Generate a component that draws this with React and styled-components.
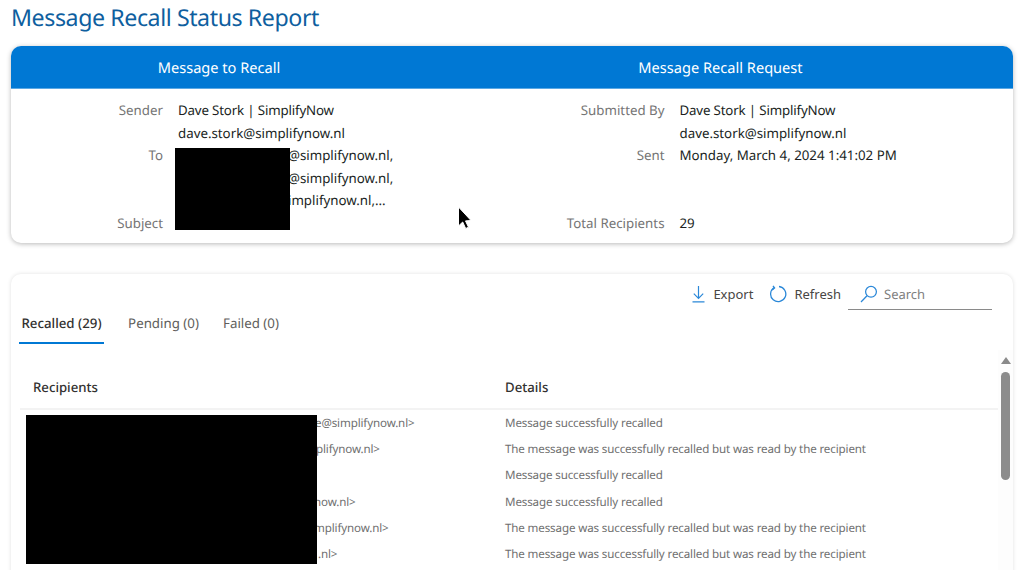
import React from "react";
import styled, { createGlobalStyle } from "styled-components";

const Global = createGlobalStyle`
  html, body { margin: 0; height: 100%; background: #fff; overflow: hidden; }
  body { font-family: "Noto Sans", "Open Sans", sans-serif; color: #201f1e; text-rendering: geometricPrecision; }
  #root { height: 570px; overflow: hidden; }
`;
const Page = styled.main`
  position: relative;
  height: 570px;
  padding: 0 11px;
  box-sizing: border-box;
  overflow: hidden;
`;
const Title = styled.h1`
  margin: 0 0 11px;
  height: 35px;
  font-size: 23.2px;
  letter-spacing: -0.43px;
  line-height: 35px;
  font-weight: 400;
  color: #0f5f9f;
`;
const SummaryCard = styled.section`
  position: relative;
  height: 197px;
  border-radius: 10px;
  background: #fff;
  box-shadow: 0 1px 5px rgba(0, 0, 0, 0.28);
  overflow: hidden;
`;
const Banner = styled.header`
  display: grid;
  grid-template-columns: 501.5px 1fr;
  height: 42px;
  background: #0078d4;
  border-bottom: 1px solid #5ca9e4;
  box-sizing: content-box;
`;
const BannerTitle = styled.h2`
  margin: 0;
  width: 416px;
  font-size: 14.6px;
  font-weight: 400;
  line-height: 44px;
  color: #fff;
  text-align: center;
`;
const Columns = styled.div`
  display: grid;
  grid-template-columns: 501.5px 1fr;
  padding-top: 10px;
`;
const Fields = styled.dl`
  display: grid;
  grid-template-columns: 152px 1fr;
  column-gap: 15px;
  grid-auto-rows: 22.5px;
  margin: 0;
  font-size: 13.3px;
  line-height: 22.5px;
`;
const Label = styled.dt`
  grid-row: span ${(p) => p.$span || 1};
  text-align: right;
  color: #757575;
`;
const Value = styled.dd`
  margin: 0;
  padding-left: ${(p) => p.$inset || 0}px;
  grid-row: ${(p) => (p.$gap ? `span ${p.$gap}` : "auto")};
  letter-spacing: ${(p) => (p.$tight ? "-0.16px" : "0")};
  color: #201f1e;
`;
const Redaction = styled.div`
  position: absolute;
  background: #000;
  left: ${(p) => p.$x}px;
  top: ${(p) => p.$y}px;
  width: ${(p) => p.$w}px;
  height: ${(p) => p.$h}px;
  z-index: 2;
`;
const ReportCard = styled.section`
  position: relative;
  margin-top: 31px;
  height: 320px;
  border-radius: 10px;
  background: #fff;
  box-shadow: 0 0 4px rgba(0, 0, 0, 0.12);
  overflow: hidden;
`;
const Toolbar = styled.div`
  display: flex;
  justify-content: flex-end;
  align-items: stretch;
  height: 36px;
  padding-right: 21px;
  font-size: 13px;
  color: #484644;
`;
const ToolButton = styled.button`
  display: flex;
  align-items: center;
  gap: ${(p) => p.$gap}px;
  margin-right: ${(p) => p.$after}px;
  padding: 4px 0 0;
  border: 0;
  background: none;
  font: inherit;
  color: inherit;
`;
const SearchBox = styled.div`
  display: flex;
  align-items: center;
  gap: 6px;
  width: 144px;
  height: 36px;
  padding: 4px 0 0 12px;
  box-sizing: border-box;
  border-bottom: 1px solid #8a8a8a;
  color: #7f7f7f;
`;
const Tabs = styled.nav`
  display: flex;
  height: 32px;
  padding-left: 8px;
  gap: 24px;
  font-size: 13.3px;
  white-space: nowrap;
`;
const Tab = styled.div`
  width: ${(p) => p.$w}px;
  height: 34px;
  box-sizing: border-box;
  padding-top: 3px;
  line-height: 20px;
  text-align: center;
  color: ${(p) => (p.$active ? "#323130" : "#605e5c")};
  font-weight: ${(p) => (p.$active ? 500 : 400)};
  border-bottom: 2px solid ${(p) => (p.$active ? "#0078d4" : "transparent")};
`;
const TableArea = styled.div`
  margin: 27px 15px 0 9px;
`;
const HeadRow = styled.div`
  display: grid;
  grid-template-columns: 472px 1fr;
  height: 41px;
  padding-left: 13px;
  line-height: 36px;
  font-size: 13.2px;
  font-weight: 500;
  color: #323130;
  border-bottom: 2px solid #f3f3f3;
  box-sizing: border-box;
`;
const Row = styled.div`
  display: grid;
  grid-template-columns: 472px 1fr;
  height: 26.2px;
  padding-left: 13px;
  line-height: 27.5px;
  font-size: 11.6px;
  letter-spacing: -0.14px;
  color: #6f6f6f;
  white-space: nowrap;
`;
const Recipient = styled.div`
  padding-left: ${(p) => p.$inset}px;
`;
const Scrollbar = styled.div`
  position: absolute;
  top: 76px;
  right: 0;
  bottom: 0;
  width: 15px;
  background: #fdfdfd;
  display: flex;
  flex-direction: column;
  align-items: center;
  padding-top: 7px;
  gap: 8px;
  box-sizing: border-box;
`;
const ScrollArrow = styled.div`
  width: 0;
  height: 0;
  border-left: 5px solid transparent;
  border-right: 5px solid transparent;
  border-bottom: 7px solid #8a8a8a;
`;
const ScrollThumb = styled.div`
  width: 9px;
  height: 108px;
  border-radius: 5px;
  background: #8c8c8c;
`;
const Pointer = styled.svg`
  position: absolute;
  left: 456px;
  top: 205px;
  z-index: 3;
`;

const rows = [
  [282, "e@simplifynow.nl>", "Message successfully recalled"],
  [283, "plifynow.nl>", "The message was successfully recalled but was read by the recipient"],
  [282, "", "Message successfully recalled"],
  [281, "now.nl>", "Message successfully recalled"],
  [281, "mplifynow.nl>", "The message was successfully recalled but was read by the recipient"],
  [285, ".nl>", "The message was successfully recalled but was read by the recipient"],
];

const ExportIcon = () => (
  <svg width="15" height="18" viewBox="0 0 15 18" fill="none" stroke="#2b88d8" strokeWidth="1.2">
    <path d="M7.5 1v12M2.8 8.6l4.7 4.7 4.7-4.7M1.5 16.8h12" />
  </svg>
);
const RefreshIcon = () => (
  <svg width="18" height="18" viewBox="0 0 18 18" fill="none" stroke="#2b88d8" strokeWidth="1.3">
    <path d="M5.2 2.6A7.6 7.6 0 1 0 10 1.5" />
    <path d="M4 .8l1.6 2.2L3.2 5" />
  </svg>
);
const SearchIcon = () => (
  <svg width="18" height="18" viewBox="0 0 18 18" fill="none" stroke="#2b88d8" strokeWidth="1.25">
    <circle cx="11" cy="6.8" r="5.4" />
    <path d="M7 10.8L1 17" />
  </svg>
);

export default function App() {
  return (
    <Page>
      <Global />
      <Title>Message Recall Status Report</Title>
      <SummaryCard>
        <Banner>
          <BannerTitle>Message to Recall</BannerTitle>
          <BannerTitle>Message Recall Request</BannerTitle>
        </Banner>
        <Columns>
          <Fields>
            <Label $span={2}>Sender</Label>
            <Value $tight>Dave Stork | SimplifyNow</Value>
            <Value>dave.stork@simplifynow.nl</Value>
            <Label $span={3}>To</Label>
            <Value $inset={110}>@simplifynow.nl,</Value>
            <Value $inset={110}>@simplifynow.nl,</Value>
            <Value $inset={110}>implifynow.nl,...</Value>
            <Label>Subject</Label>
            <Value />
          </Fields>
          <Fields>
            <Label $span={2}>Submitted By</Label>
            <Value $tight>Dave Stork | SimplifyNow</Value>
            <Value>dave.stork@simplifynow.nl</Value>
            <Label $span={3}>Sent</Label>
            <Value $gap={3}>Monday, March 4, 2024 1:41:02 PM</Value>
            <Label>Total Recipients</Label>
            <Value>29</Value>
          </Fields>
        </Columns>
        <Redaction $x={164} $y={102} $w={115} $h={82} />
      </SummaryCard>
      <ReportCard>
        <Toolbar>
          <ToolButton $gap={7} $after={16}><ExportIcon />Export</ToolButton>
          <ToolButton $gap={7} $after={7}><RefreshIcon />Refresh</ToolButton>
          <SearchBox><SearchIcon />Search</SearchBox>
        </Toolbar>
        <Tabs>
          <Tab $active $w={85}>Recalled (29)</Tab>
          <Tab $w={71}>Pending (0)</Tab>
          <Tab $w={56}>Failed (0)</Tab>
        </Tabs>
        <TableArea>
          <HeadRow><div>Recipients</div><div>Details</div></HeadRow>
          {rows.map(([inset, who, detail], i) => (
            <Row key={i}>
              <Recipient $inset={inset}>{who}</Recipient>
              <div>{detail}</div>
            </Row>
          ))}
        </TableArea>
        <Redaction $x={15} $y={141} $w={291} $h={149} />
        <Scrollbar><ScrollArrow /><ScrollThumb /></Scrollbar>
      </ReportCard>
      <Pointer width="17" height="26" viewBox="0 0 17 26">
        <path d="M2.5 2v19l4.2-4 3 6.5 2.8-1.3-3-6.3 5.5-.4z" fill="#000" stroke="#fff" strokeWidth="1" />
      </Pointer>
    </Page>
  );
}
